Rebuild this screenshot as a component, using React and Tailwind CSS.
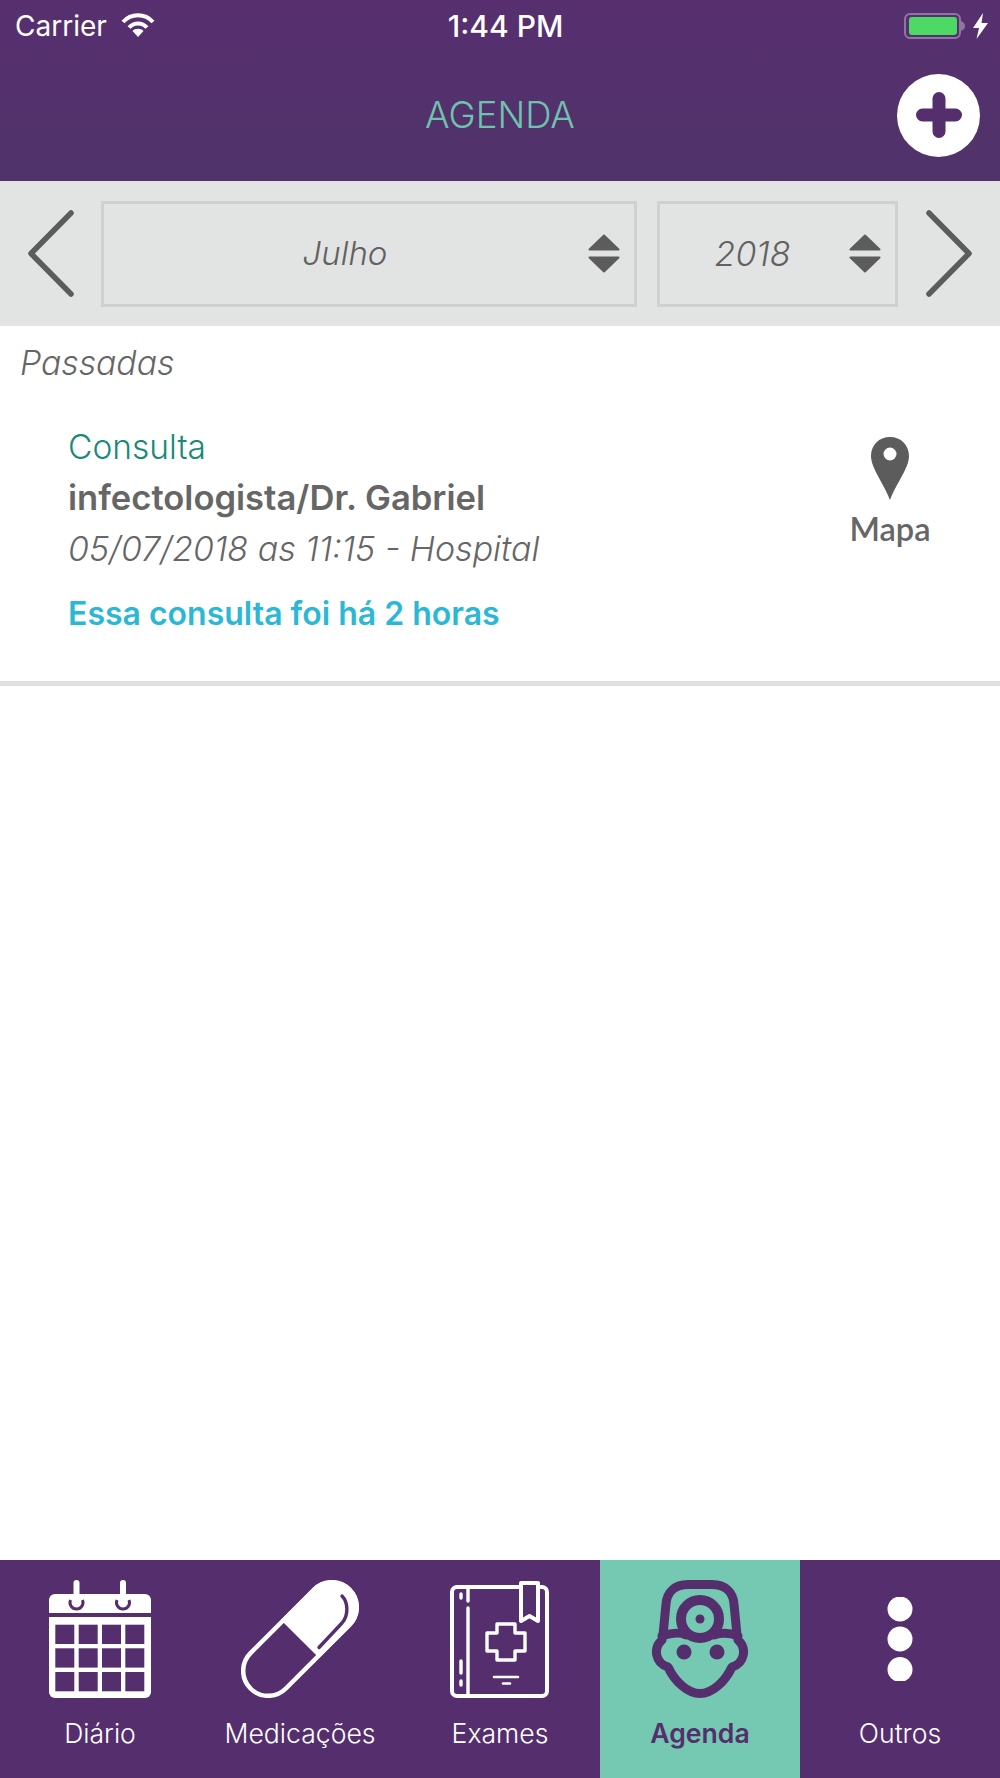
import React from "react";

const P = "#552f6d";

function Chevron({ dir }) {
  return (
    <svg width="46" height="87" viewBox="0 0 46 87" className="shrink-0">
      <path
        d={dir === "left" ? "M43 3 L3 43.5 L43 84" : "M3 3 L43 43.5 L3 84"}
        fill="none"
        stroke="#5c5c5c"
        strokeWidth="5.5"
        strokeLinecap="round"
        strokeLinejoin="round"
      />
    </svg>
  );
}

function Sort() {
  return (
    <svg width="32" height="39" viewBox="0 0 32 39" className="shrink-0">
      <path d="M16 1.5 L30.5 15.5 L1.5 15.5 Z" fill="#5c5c5c" stroke="#5c5c5c" strokeWidth="2" strokeLinejoin="round" />
      <path d="M1.5 23.5 L30.5 23.5 L16 37.5 Z" fill="#5c5c5c" stroke="#5c5c5c" strokeWidth="2" strokeLinejoin="round" />
    </svg>
  );
}

function Calendar() {
  const xs = [6.3, 29.7, 53, 76.3];
  const ys = [44.7, 68.3, 92];
  return (
    <svg width="102" height="118" viewBox="0 0 102 118">
      <path d="M6 14 H96 A6 6 0 0 1 102 20 V33 H0 V20 A6 6 0 0 1 6 14 Z" fill="#fff" />
      <path d="M0 37 H102 V112 A6 6 0 0 1 96 118 H6 A6 6 0 0 1 0 112 Z" fill="#fff" />
      {xs.map((x) => ys.map((y) => <rect key={x + "-" + y} x={x} y={y} width="19" height="19.3" fill={P} />))}
      {[27.5, 74].map((x) => (
        <g key={x}>
          <path d={`M${x - 6} 20 A6.5 6.5 0 1 0 ${x + 6} 20`} fill="none" stroke={P} strokeWidth="3" />
          <line x1={x} y1="3" x2={x} y2="22" stroke="#fff" strokeWidth="6" strokeLinecap="round" />
        </g>
      ))}
    </svg>
  );
}

function Pill() {
  return (
    <svg width="118" height="118" viewBox="0 0 118 118">
      <g transform="rotate(-45 59 59)">
        <rect x="-11" y="34" width="140" height="50" rx="25" fill="none" stroke="#fff" strokeWidth="4.5" />
        <path d="M59 32 H104 A27 27 0 0 1 104 86 H59 Z" fill="#fff" />
      </g>
      <path d="M78 67.5 L101 43 C108 35 107 22 101 16" fill="none" stroke={P} strokeWidth="3.4" strokeLinecap="round" />
    </svg>
  );
}

function Book() {
  return (
    <svg width="100" height="117" viewBox="0 0 100 117" fill="none" stroke="#fff" strokeWidth="4" strokeLinecap="round" strokeLinejoin="round">
      <path d="M70 6 H7 A5 5 0 0 0 2 11 V110 A5 5 0 0 0 7 115 H92 A5 5 0 0 0 97 110 V11 A5 5 0 0 0 92 6 H90" />
      <path d="M71 2 H88 V40 L79.5 35 L71 40 Z" />
      <path d="M18 7 V20 M18 27 V114" strokeWidth="3.4" />
      <path d="M11 13 V17 M11 80 V92 M11 100 V104" strokeWidth="3.4" />
      <path d="M47 43 H65 V52 H75 V70 H65 V79 H47 V70 H37 V52 H47 Z" strokeWidth="3.4" />
      <path d="M44 96 H68 M53 102.5 H60" strokeWidth="2.6" />
    </svg>
  );
}

function Doctor() {
  return (
    <svg width="96" height="118" viewBox="0 0 96 118" fill="none" stroke={P} strokeWidth="9" strokeLinecap="round" strokeLinejoin="round">
      <path d="M11 55 L14 24 C15 12 23 4.5 36 4.5 H60 C73 4.5 81 12 82 24 L85 55" />
      <path d="M10 56 C22 52 30 53 34 55 M62 55 C68 53 76 52 86 56" />
      <circle cx="48" cy="39" r="19" strokeWidth="10" />
      <circle cx="48" cy="39" r="4.5" fill={P} stroke="none" />
      <path d="M10 60 C1 68 3 83 16 87 C23 102 36 113.5 48 113.5 C60 113.5 73 102 80 87 C93 83 95 68 86 60" />
      <circle cx="32" cy="72" r="7.5" fill={P} stroke="none" />
      <circle cx="65" cy="72" r="7.5" fill={P} stroke="none" />
    </svg>
  );
}

function Dots() {
  return (
    <svg width="26" height="84" viewBox="0 0 26 84" fill="#fff">
      <circle cx="13" cy="12" r="12.5" />
      <circle cx="13" cy="42" r="12.5" />
      <circle cx="13" cy="72.5" r="12.5" />
    </svg>
  );
}

function Tab({ icon, label, active }) {
  return (
    <div className={`flex w-[200px] flex-col items-center pt-5 ${active ? "bg-[#75c8b2]" : ""}`}>
      <div className="flex h-[118px] items-center justify-center">{icon}</div>
      <span
        className={`mt-[20px] text-[26.6px] leading-[30px] ${active ? "font-semibold text-[#552f6d]" : "font-light text-white"}`}
      >
        {label}
      </span>
    </div>
  );
}

function Select({ width, label, labelClass }) {
  return (
    <div className={`flex h-[106px] ${width} items-center border-[3px] border-[#cfd1d0] pr-[14px]`}>
      <span className={`flex-1 text-center font-light text-[#616161] italic ${labelClass}`}>{label}</span>
      <Sort />
    </div>
  );
}

export default function App() {
  return (
    <div className="flex h-[1778px] w-[1000px] flex-col overflow-hidden bg-white font-['Inter',sans-serif]">
      <header className="h-[181px] bg-gradient-to-b from-[#572f6f] to-[#50336a]">
        <div className="grid h-[50px] grid-cols-[1fr_auto_1fr] items-center pr-[12px] pl-[15px] pt-[1px] text-white">
          <div className="flex items-center gap-[14px]">
            <span className="text-[28px] leading-none">Carrier</span>
            <svg width="34" height="25" viewBox="0 0 34 25" fill="none" stroke="#fff" strokeWidth="4">
              <path d="M2 9 C10 0 24 0 32 9" />
              <path d="M8 14.5 C13 9 21 9 26 14.5" />
              <path d="M17 24 L11.5 18 C14 15 20 15 22.5 18 Z" fill="#fff" stroke="none" />
            </svg>
          </div>
          <span className="pl-[8px] text-[30px] leading-none font-medium">1:44 PM</span>
          <div className="flex items-center justify-end gap-[8px]">
            <div className="flex items-center">
              <div className="flex h-[26px] w-[57px] items-center justify-center rounded-[6px] border-2 border-[#8f769f]">
                <div className="h-[18px] w-[48px] rounded-[3px] bg-[#4cd964]" />
              </div>
              <svg width="4" height="10" viewBox="0 0 4 10"><path d="M0 0 C3 1 4 3 4 5 C4 7 3 9 0 10 Z" fill="#8f769f" /></svg>
            </div>
            <svg width="15" height="26" viewBox="0 0 15 26" fill="#fff">
              <path d="M10 0 L0 15 H6 L3.5 26 L15 10 H8.5 Z" />
            </svg>
          </div>
        </div>
        <div className="grid h-[131px] grid-cols-[1fr_auto_1fr] items-center">
          <div />
          <h1 className="text-[36.5px] leading-none font-light text-[#6fc3ae]">AGENDA</h1>
          <div className="flex justify-end pr-5">
            <div className="-mt-[1px] flex h-[83px] w-[83px] items-center justify-center rounded-full bg-white">
              <svg width="46" height="46" viewBox="0 0 46 46">
                <path d="M6.5 23 H39.5 M23 6.5 V39.5" stroke={P} strokeWidth="13" strokeLinecap="round" />
              </svg>
            </div>
          </div>
        </div>
      </header>

      <div className="flex h-[145px] items-center bg-[#e2e4e3] pl-[28px]">
        <Chevron dir="left" />
        <div className="ml-[27px]"><Select width="w-[536px]" label="Julho" labelClass="pl-[8px] pr-[10px] text-[33px]" /></div>
        <div className="ml-[20px]"><Select width="w-[241px]" label="2018" labelClass="pr-[4px] text-[34px]" /></div>
        <div className="ml-[28px]"><Chevron dir="right" /></div>
      </div>

      <main className="flex-1">
        <p className="pt-[15px] pl-5 text-[33.7px] leading-[44px] font-light text-[#666] italic">Passadas</p>
        <div className="flex h-[301px] border-b-[5px] border-[#dfdfdf] pt-[37px]">
          <div className="flex flex-1 flex-col pl-[68px]">
            <p className="text-[33.5px] leading-[50px] font-light text-[#1a8a78]">Consulta</p>
            <p className="text-[34.6px] leading-[51px] font-semibold text-[#666]">infectologista/Dr. Gabriel</p>
            <p className="pt-[1px] text-[34px] leading-[50px] font-light text-[#666] italic">05/07/2018 as 11:15 - Hospital</p>
            <p className="mt-[15px] text-[32px] leading-[50px] font-semibold text-[#2bb8d4]">Essa consulta foi há 2 horas</p>
          </div>
          <div className="flex w-[220px] flex-col items-center pt-[15px]">
            <svg width="38" height="63" viewBox="0 0 38 63" fill="#5c5c5c">
              <path fillRule="evenodd" d="M19 0 C30 0 38 8 38 19 C38 31 25 47 19 63 C13 47 0 31 0 19 C0 8 8 0 19 0 Z M19 10.5 A6.5 6.5 0 1 0 19 23.5 A6.5 6.5 0 1 0 19 10.5 Z" />
            </svg>
            <span className="mt-[9px] font-['Lato',sans-serif] text-[32.5px] leading-[40px] font-semibold text-[#666]">Mapa</span>
          </div>
        </div>
      </main>

      <nav className="flex h-[218px] bg-[#552f6d]">
        <Tab icon={<Calendar />} label="Diário" />
        <Tab icon={<Pill />} label="Medicações" />
        <Tab icon={<Book />} label="Exames" />
        <Tab icon={<Doctor />} label="Agenda" active />
        <Tab icon={<Dots />} label="Outros" />
      </nav>
    </div>
  );
}
